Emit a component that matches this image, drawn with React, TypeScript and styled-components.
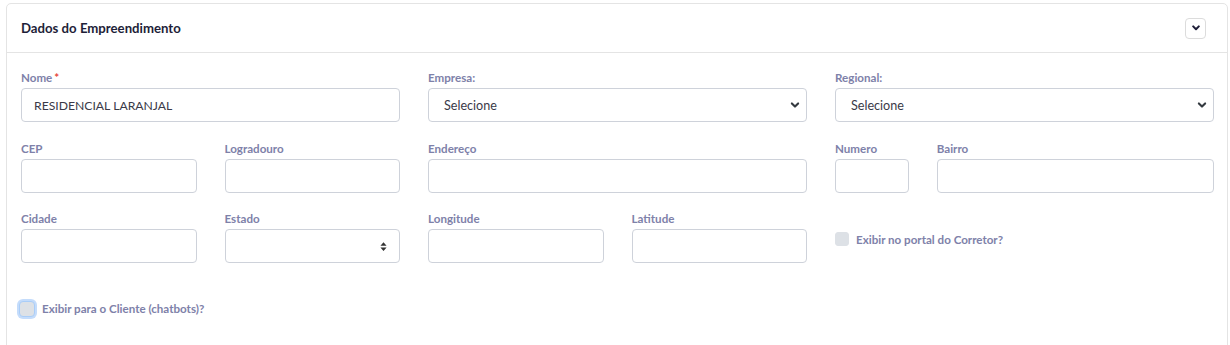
import React from "react";
import styled, { createGlobalStyle } from "styled-components";

const GlobalStyle = createGlobalStyle`
  * { box-sizing: border-box; }
  body {
    margin: 0;
    background: #ffffff;
    font-family: "Lato", "Open Sans", Arial, sans-serif;
  }
`;

const chevron = `url("data:image/svg+xml,%3csvg xmlns='http://www.w3.org/2000/svg' viewBox='0 0 16 16'%3e%3cpath fill='none' stroke='%23343a40' stroke-linecap='round' stroke-linejoin='round' stroke-width='3.4' d='m3 5.5 5 5 5-5'/%3e%3c/svg%3e")`;
const carets = `url("data:image/svg+xml,%3csvg xmlns='http://www.w3.org/2000/svg' viewBox='0 0 8 10'%3e%3cpath fill='%23333' d='M4 0 7.5 4h-7zM4 10 .5 6h7z'/%3e%3c/svg%3e")`;

const Page = styled.div`
  padding: 3px 2px 0 6px;
`;

const Card = styled.section`
  background: #fff;
  border: 1px solid #e4e4e4;
  border-radius: 5px;
  min-height: 360px;
`;

const CardHeader = styled.header`
  display: flex;
  align-items: center;
  justify-content: space-between;
  height: 49px;
  padding: 0 21px 0 14px;
  border-bottom: 1px solid #e4e4e4;
`;

const Title = styled.h2`
  margin: 0;
  font-size: 13.2px;
  font-weight: 700;
  color: #1e1e38;
`;

const CollapseButton = styled.button`
  width: 21px;
  height: 21px;
  display: flex;
  align-items: center;
  justify-content: center;
  padding: 0;
  background: #fff;
  border: 1px solid #dcdcdc;
  border-radius: 4px;
  cursor: pointer;
`;

const CardBody = styled.div`
  padding: 17px 13px 0 14px;
`;

const FormGrid = styled.div`
  display: grid;
  grid-template-columns: repeat(12, 1fr);
  column-gap: 28px;
  row-gap: 18.5px;
`;

const Field = styled.div<{ $span: number }>`
  grid-column: span ${(p) => p.$span};
  display: flex;
  flex-direction: column;
`;

const Label = styled.label`
  font-size: 11.6px;
  line-height: 15px;
  font-weight: 700;
  color: #7e81a9;
  margin-bottom: 3px;
`;

const Required = styled.span`
  color: #e8453c;
  margin-left: 2px;
`;

const TextInput = styled.input`
  height: 34px;
  width: 100%;
  padding: 0 12px;
  border: 1px solid #ced2da;
  border-radius: 4px;
  font-family: inherit;
  font-size: 12.2px;
  color: #3a3a48;
  background: #fff;
  outline: none;
`;

const Select = styled.select<{ $variant?: "chevron" | "carets" }>`
  height: 34px;
  width: 100%;
  padding: 0 30px 0 15px;
  border: 1px solid #ced2da;
  border-radius: 4px;
  font-family: inherit;
  font-size: 12.6px;
  color: #3a3a48;
  background-color: #fff;
  background-repeat: no-repeat;
  background-image: ${(p) => (p.$variant === "carets" ? carets : chevron)};
  background-position: ${(p) =>
    p.$variant === "carets" ? "right 12px center" : "right 6px center"};
  background-size: ${(p) => (p.$variant === "carets" ? "7px 9px" : "10px 10px")};
  appearance: none;
  outline: none;
`;

const CheckCell = styled.div<{ $span: number; $top: number }>`
  grid-column: span ${(p) => p.$span};
  padding-top: ${(p) => p.$top}px;
`;

const CheckRow = styled.label`
  display: flex;
  align-items: center;
  gap: 7px;
  font-size: 11.6px;
  font-weight: 700;
  color: #7e81a9;
  cursor: pointer;
`;

const Checkbox = styled.input<{ $focused?: boolean }>`
  appearance: none;
  margin: 0 0 0 ${(p) => (p.$focused ? -2 : 0)}px;
  width: ${(p) => (p.$focused ? 16 : 14)}px;
  height: ${(p) => (p.$focused ? 16 : 14)}px;
  border-radius: ${(p) => (p.$focused ? 4 : 3)}px;
  background: #dde1e6;
  border: 1px solid ${(p) => (p.$focused ? "#a9cdf8" : "#dde1e6")};
  box-shadow: ${(p) => (p.$focused ? "0 0 0 2px #c4dcfb" : "none")};
`;

export default function App() {
  return (
    <Page>
      <GlobalStyle />
      <Card>
        <CardHeader>
          <Title>Dados do Empreendimento</Title>
          <CollapseButton aria-label="Recolher">
            <svg width="8" height="6" viewBox="0 0 8 6">
              <path
                d="M1.2 1.4 4 4.2 6.8 1.4"
                fill="none"
                stroke="#1e1e38"
                strokeWidth="2"
                strokeLinecap="round"
                strokeLinejoin="round"
              />
            </svg>
          </CollapseButton>
        </CardHeader>
        <CardBody>
          <FormGrid>
            <Field $span={4}>
              <Label>
                Nome<Required>*</Required>
              </Label>
              <TextInput defaultValue="RESIDENCIAL LARANJAL" />
            </Field>
            <Field $span={4}>
              <Label>Empresa:</Label>
              <Select defaultValue="">
                <option value="">Selecione</option>
              </Select>
            </Field>
            <Field $span={4}>
              <Label>Regional:</Label>
              <Select defaultValue="">
                <option value="">Selecione</option>
              </Select>
            </Field>

            <Field $span={2}>
              <Label>CEP</Label>
              <TextInput />
            </Field>
            <Field $span={2}>
              <Label>Logradouro</Label>
              <TextInput />
            </Field>
            <Field $span={4}>
              <Label>Endereço</Label>
              <TextInput />
            </Field>
            <Field $span={1}>
              <Label>Numero</Label>
              <TextInput />
            </Field>
            <Field $span={3}>
              <Label>Bairro</Label>
              <TextInput />
            </Field>

            <Field $span={2}>
              <Label>Cidade</Label>
              <TextInput />
            </Field>
            <Field $span={2}>
              <Label>Estado</Label>
              <Select $variant="carets" defaultValue="">
                <option value=""></option>
              </Select>
            </Field>
            <Field $span={2}>
              <Label>Longitude</Label>
              <TextInput />
            </Field>
            <Field $span={2}>
              <Label>Latitude</Label>
              <TextInput />
            </Field>
            <CheckCell $span={4} $top={21}>
              <CheckRow>
                <Checkbox type="checkbox" />
                Exibir no portal do Corretor?
              </CheckRow>
            </CheckCell>

            <CheckCell $span={12} $top={19}>
              <CheckRow>
                <Checkbox type="checkbox" $focused />
                Exibir para o Cliente (chatbots)?
              </CheckRow>
            </CheckCell>
          </FormGrid>
        </CardBody>
      </Card>
    </Page>
  );
}
